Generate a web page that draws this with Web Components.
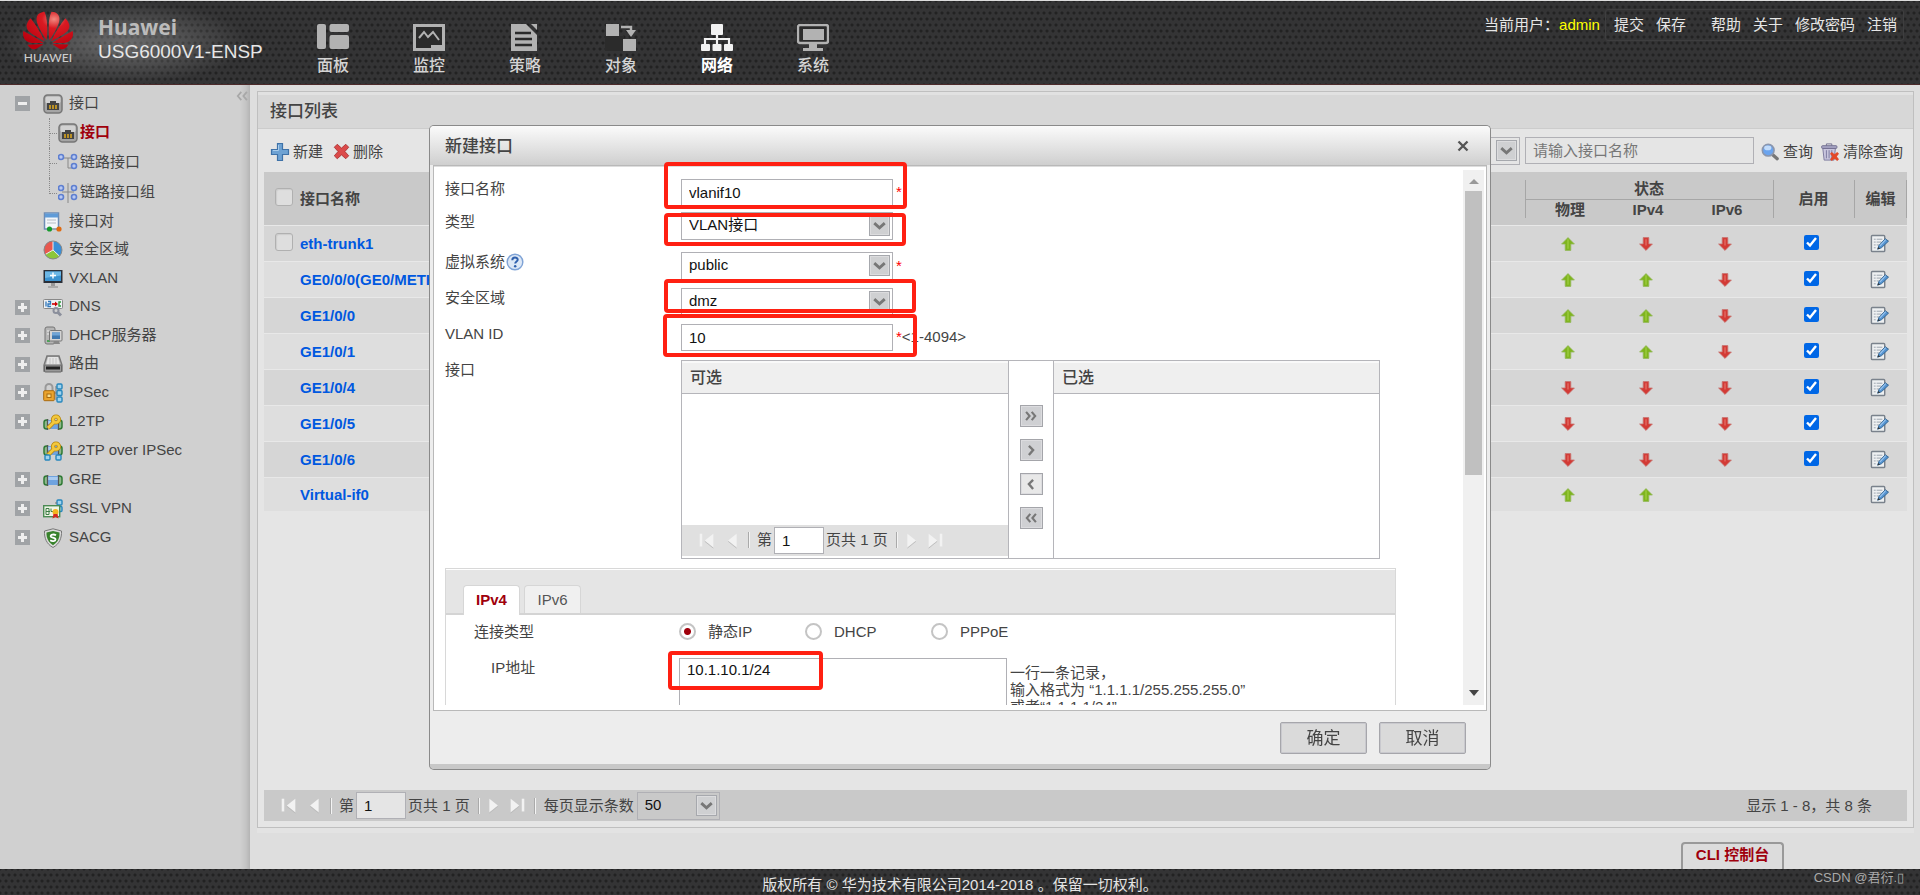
<!DOCTYPE html>
<html lang="zh-CN">
<head>
<meta charset="utf-8">
<title>USG6000V1-ENSP</title>
<style>
  html, body { margin: 0; height: 100%; }
  body {
    font: 15px/20px "Liberation Sans", "Noto Sans CJK SC", sans-serif;
    color: #444; background: #dedede;
  }
</style>
</head>
<body>
<fw-app></fw-app>

<script>
const DOTS = `background-color:#343435;
  background-image: radial-gradient(circle at 50% 50%, #222 0 1px, transparent 2px), radial-gradient(circle at 50% 50%, #222 0 1px, transparent 2px);
  background-size: 6px 12px; background-position: 0 0, 3px 6px;`;

function define(name, render) {
  customElements.define(name, class extends HTMLElement {
    connectedCallback() {
      if (this.shadowRoot) return;
      const t = document.createElement('template');
      t.innerHTML = render(this);
      this.attachShadow({ mode: 'open' }).append(t.content.cloneNode(true));
    }
  });
}

/* ---------- icons ---------- */
const port = `<rect x="1" y="1" width="18" height="18" rx="3.500" fill="#a5a5a5" stroke="#777" stroke-width="1.500"/><rect x="2.500" y="2.500" width="15" height="7" rx="2" fill="#ddd" opacity=".8"/><path d="M4 16V9h3V7h6v2h3v7z" fill="#444"/><path d="M7 11v4M10 11v4M13 11v4" stroke="#d9a520" stroke-width="1.600"/>`;
const ring = (x, y) => `<circle cx="${x}" cy="${y}" r="2.500" fill="#b9c9f2" stroke="#5e7fd0" stroke-width="1.600"/>`;
const tube = `<rect x="1" y="6" width="5" height="9" rx="2.500" fill="#8db98b" stroke="#2f7a35" stroke-width="1.500"/><rect x="14" y="6" width="5" height="9" rx="2.500" fill="#8db98b" stroke="#2f7a35" stroke-width="1.500"/><rect x="4.500" y="6" width="11" height="9" fill="#6fa3df"/><rect x="4.500" y="7" width="11" height="3" fill="#a9cbf1"/><path d="M4.500 5v11M15.500 5v11" stroke="#555" stroke-width="1.200"/>`;
const key = `<g fill="none" stroke="#b8860b" stroke-width="4.200"><circle cx="13" cy="5.500" r="3"/><path d="M11 8 5 14"/></g><g fill="none" stroke="#f3c83c" stroke-width="2.600"><circle cx="13" cy="5.500" r="3"/><path d="M11 8 5 14"/></g>`;
const blueBox = (x, y) => `<rect x="${x}" y="${y}" width="5" height="5" rx="1" fill="#9fd3ef" stroke="#2787bd" stroke-width="1.400"/>`;
const ICONS = {
  port,
  link: `<path d="M3 5h12M10 5v10h6" fill="none" stroke="#888"/>${ring(3,4)}${ring(16,4)}${ring(16,13)}`,
  linkgroup: `<path d="M10 0v20M4 9h12" fill="none" stroke="#888"/>${ring(3,5)}${ring(16,5)}${ring(3,14)}${ring(16,14)}`,
  pair: `<rect x="1.500" y="1" width="14" height="16" fill="#f3f6fa" stroke="#6d8cb5" stroke-width="1.500"/><rect x="2" y="1.500" width="13" height="4" fill="#5f9bd8"/><path d="M4 8h9M4 11h9" stroke="#b5bcc6"/><path d="M6 17h10" stroke="#aaa"/><circle cx="6.500" cy="17" r="2.600" fill="#169a2c"/><circle cx="16" cy="17" r="2.600" fill="#e06a10"/>`,
  zone: `<circle cx="10" cy="10" r="9" fill="#3b8fd6"/><path d="M10 10V1A9 9 0 0 0 2.200 14.500z" fill="#e8574e"/><path d="M10 10 2.200 14.500A9 9 0 0 0 16.500 16.200z" fill="#8cc63c"/><path d="M10 1v9l6.500 6.200M10 10l-7.800 4.500" stroke="#eee" fill="none"/><circle cx="10" cy="10" r="9" fill="none" stroke="#888"/>`,
  vxlan: `<rect x=".5" y="1" width="19" height="13" fill="#2a2f38"/><rect x="2" y="2.500" width="16" height="9.500" fill="#3b93d1"/><path d="M2 2.500h16v4L2 9z" fill="#6cb7e6"/><path d="M10 3.500v6M7 6.500h6" stroke="#fff" stroke-width="1.400"/><path d="M8 14h4v3H8z" fill="#999"/><path d="M5 17h10v2H5z" fill="#aaa"/>`,
  dns: `<rect x=".5" y="2.500" width="19" height="9" rx="1" fill="#eef1f4" stroke="#888"/><path d="M3 4.500v5M5 4.500h2.500v2.500H5v2.500h3" stroke="#2f78bd" stroke-width="1.300" fill="none"/><path d="M9 7h3" stroke="#c00" stroke-width="1.600"/><path d="m12 4.500 3 2.500-3 2.500z" fill="#c00"/><path d="M18 5h-2v4h2" stroke="#2c9b3b" fill="none" stroke-width="1.400"/><circle cx="13" cy="13.500" r="2.500" fill="none" stroke="#8b8f9c" stroke-width="2"/><path d="m14.500 15 3.500 3.500" stroke="#8b8f9c" stroke-width="3"/>`,
  dhcp: `<rect x="2" y="1" width="10" height="17" rx="2" fill="#b5b5b5" stroke="#757575"/><path d="M4 5h6M4 8h6" stroke="#eee"/><path d="M4 15h3" stroke="#2c9b3b" stroke-width="1.500"/><rect x="6.500" y="4.500" width="12.500" height="10.500" rx="1" fill="#d4d4d4" stroke="#777"/><rect x="9" y="6.500" width="8" height="6.500" fill="#3f78b0"/><path d="M9 6.500h8v3H9z" fill="#6fa4d6"/><path d="M10 18h7l-1-3h-5z" fill="#888"/>`,
  route: `<path d="M4 2h12l3 9v6H1v-6z" fill="#b5b5b5" stroke="#777" stroke-width="1.400"/><path d="M5 3h10l2 8H3z" fill="#e4e4e4"/><path d="M7 4v6M10 4v6M13 4v6" stroke="#c4c4c4"/><rect x="1.500" y="11" width="17" height="7" rx="1" fill="#999" stroke="#666"/><rect x="3" y="12.500" width="14" height="3" fill="#222"/>`,
  ipsec: `<path d="M13 3v14M11 10h3" stroke="#777" fill="none"/>${blueBox(14,1)}${blueBox(14,7.500)}${blueBox(14,14)}<path d="M2.500 10V4.500a3.500 3.500 0 0 1 7 0V10" fill="none" stroke="#999" stroke-width="2"/><rect x=".7" y="7.700" width="10.600" height="10" rx="1" fill="#eba42d" stroke="#a86a10"/><rect x="4" y="11" width="4" height="3.500" fill="#f9df8f" stroke="#a86a10"/>`,
  l2tp: `<g transform="translate(0 2)">${tube}</g><g transform="translate(0 2)">${key}</g>`,
  l2tpipsec: `<g transform="translate(0 -1)">${tube}</g>${key}${blueBox(2,14)}${blueBox(13,14)}`,
  gre: tube,
  ssl: `${blueBox(14,1)}${blueBox(14,7.500)}<path d="M12 4h2" stroke="#777"/><rect x=".7" y="6.700" width="16" height="11" fill="#eef5e6" stroke="#4a8b53" stroke-width="1.400"/><path d="M3 9.500h3v6H3zM8 9.500v3h2M3 12.500h4" stroke="#3c7d45" fill="none"/><circle cx="12.500" cy="13" r="3" fill="#f3b41e"/><path d="m10.500 15-1 4.500 3-1.500 3 1.500-1-4.500z" fill="#d3281f"/>`,
  sacg: `<path d="M10 .8 18.500 3c.3 7-2 13-8.500 16.500C3.500 16 1.200 10 1.500 3z" fill="#ddd" stroke="#777"/><path d="M10 3 16.500 4.600c.2 5.500-1.800 10-6.500 12.700C5.300 14.600 3.300 10 3.500 4.600z" fill="#37822b"/><path d="M13 7.200C11 6 7.500 6.300 7.700 8.300c.2 1.700 4.800 1 4.800 3.200 0 1.800-3.300 2-5.300.8" stroke="#fff" stroke-width="1.800" fill="none"/>`,
  add: `<path d="M7.500 1.500h5v6h6v5h-6v6h-5v-6h-6v-5h6z" fill="#6ea2d3" stroke="#3f72a8" stroke-width="1.200"/><path d="M8.500 3v5.500H3" stroke="#a9cdec" fill="none"/>`,
  del: `<path d="m5 1.500 5 4.500 5-4.500L18.500 5 14 10l4.500 5-3.500 3.500-5-4.500-5 4.500L1.500 15 6 10 1.500 5z" fill="#db4a4a" stroke="#a83232"/>`,
  search: `<path d="m13 13 5 4.500" stroke="#777" stroke-width="3.600" stroke-linecap="round"/><circle cx="8" cy="8" r="6.500" fill="#6ba4ee" stroke="#8b96ad" stroke-width="1.800"/><ellipse cx="7.500" cy="5.500" rx="4" ry="2.600" fill="#c2dcfb"/>`,
  trash: `<path d="M2 6h14l-1.500 13h-11z" fill="#c9c6de" stroke="#77749a"/><path d="M6 8v9M9 8v9M12 8v9" stroke="#77749a"/><rect x=".7" y="3" width="17" height="3" rx="1" fill="#a9a6c6" stroke="#6d6a8c"/><path d="M6 3V1h6v2" fill="none" stroke="#6d6a8c"/><path d="m12 10 3 2.500 3-2.500 2 2-2.500 3 2.500 3-2 2-3-2.500-3 2.500-2-2 2.500-3-2.500-3z" fill="#e2492a"/>`,
  up: `<path d="M10 2 18 10h-4.500v8h-7v-8H2z" fill="#7fb51e" stroke="#93b85b"/><path d="M10 4v12" stroke="#99c93c" stroke-width="2"/>`,
  down: `<path d="M10 18 2 10h4.500V2h7v8H18z" fill="#d33a35" stroke="#c77470"/><path d="M10 4v8" stroke="#e0655d" stroke-width="2"/>`,
  edit: `<rect x="1.500" y="1.500" width="14" height="17" rx="1" fill="#eef0f2" stroke="#7a828c" stroke-width="1.500"/><path d="M4 5.500h2M7 5.500h6M4 8.500h2M7 8.500h5M4 11.500h2M7 11.500h3M4 14.500h2" stroke="#9aa3ad"/><path d="m8 16 1.500-4L16 5l3.500 2.500-7.500 7z" fill="#5594d2" stroke="#33648f"/><path d="M10.500 12.500 16.500 6" stroke="#9cc6ee" stroke-width="1.200"/><path d="m8 16 .8-2.400 1.800 1.600z" fill="#333"/>`,
  help: `<circle cx="10" cy="10" r="8.700" fill="#dde8f6" stroke="#7fa3d6" stroke-width="1.600"/><path d="M7 8c0-4 6-3.600 6-.6 0 2-2.800 2-2.800 4.400" fill="none" stroke="#2f60ad" stroke-width="2.200"/><circle cx="10.200" cy="14.800" r="1.400" fill="#2f60ad"/>`,
  chevron: `<path d="m4.500 7.500 5.500 5 5.500-5" fill="none" stroke="#777" stroke-width="3"/>`,
  collapse: `<path d="m9 4-5 6 5 6M17 4l-5 6 5 6" fill="none" stroke="#a8a8a8" stroke-width="2.600"/>`,
  close: `<path d="m5 5 10 10M15 5 5 15" stroke="#555" stroke-width="2.600"/>`,
  rr: `<path d="m3 4 5 6-5 6M11 4l5 6-5 6" fill="none" stroke="#777" stroke-width="3"/>`,
  r: `<path d="m7 4 6 6-6 7" fill="none" stroke="#777" stroke-width="3.400"/>`,
  l: `<path d="m13 4-6 6 6 7" fill="none" stroke="#777" stroke-width="3.400"/>`,
  ll: `<path d="m9 4-5 6 5 6M17 4l-5 6 5 6" fill="none" stroke="#777" stroke-width="3"/>`,
  first: `<path d="M3.500 2v15" stroke="#f2f2f2" stroke-width="3"/><path d="M18 2v16l-10-8z" fill="#f2f2f2"/><path d="m8 11 10 8" stroke="#bbb"/>`,
  prev: `<path d="M16 2v16L6 10z" fill="#f2f2f2"/><path d="m6 11 10 8" stroke="#bbb"/>`,
  next: `<path d="M4 2v16l10-8z" fill="#f2f2f2"/><path d="m4 19 10-8" stroke="#bbb"/>`,
  last: `<path d="M16.500 2v15" stroke="#f2f2f2" stroke-width="3"/><path d="M2 2v16l10-8z" fill="#f2f2f2"/><path d="m2 19 10-8" stroke="#bbb"/>`,
};
define('fw-icon', el => `
  <style>:host{display:inline-block;flex:none;width:var(--size,20px);height:var(--size,20px)} svg{display:block;width:100%;height:100%}</style>
  <svg viewBox="0 0 20 20" aria-hidden="true">${ICONS[el.getAttribute('name')]}</svg>`);

const NAV = {
  dash: `<rect x="0" y="0" width="9" height="25" rx="2"/><rect x="12.500" y="0" width="19.500" height="8" rx="2"/><rect x="12.500" y="11" width="19.500" height="14" rx="2"/>`,
  monitor: `<path d="M0 0h32v27H0z"/><path d="M3 3h26v18h-3v3H3z" fill="#2b2b2b"/><path d="m6 14 5-6 4 5 5-5 6 8" fill="none" stroke="currentColor" stroke-width="2"/><path d="M18 21h8v4h-8z"/>`,
  policy: `<path d="M2 0h15l11 11v16H2z"/><path d="M22 0h6v6z"/><path d="M6 9h16M6 15h17M6 21h17" stroke="#2b2b2b" stroke-width="2.400"/>`,
  object: `<path d="M0 12h19v15H0z" fill="#2b2b2b"/><rect x="1" y="0" width="13" height="12"/><rect x="18" y="15" width="13" height="12"/><path d="M16 3h10v6" fill="none" stroke="currentColor" stroke-width="2.400"/><path d="M21 6h10l-5 7z"/>`,
  network: `<rect x="10" y="0" width="12" height="11" rx="1"/><path d="M16 10v10M4 20v-5h24v5" fill="none" stroke="currentColor" stroke-width="2.200"/><rect x="0" y="20" width="9" height="7" rx="1"/><rect x="11.500" y="20" width="9" height="7" rx="1"/><rect x="23" y="20" width="9" height="7" rx="1"/>`,
  system: `<rect x="1" y="1" width="30" height="18" rx="2" fill="#2b2b2b" stroke="currentColor" stroke-width="2.400"/><rect x="6" y="5" width="21" height="11"/><path d="M12 20h8v4h6v3H6v-3h6z"/>`,
};
define('nav-item', el => `
  <style>
    :host{display:block;color:#d4d4d4;--ink:#b2b2b2} :host([current]){color:#fff;--ink:#f2f2f2}
    a{display:flex;flex-direction:column;align-items:center;gap:5px;width:96px;color:inherit;text-decoration:none;font:500 16px/20px "Liberation Sans","Noto Sans CJK SC",sans-serif}
    :host([current]) a{font-weight:700}
    svg{width:32px;height:27px;color:var(--ink)}
  </style>
  <a href="#"><svg viewBox="0 0 32 27" fill="currentColor" aria-hidden="true">${NAV[el.getAttribute('icon')]}</svg><slot></slot></a>`);

define('fw-header', () => `
  <style>
    :host{display:flex;height:83px;border-top:1px solid #ddd;border-bottom:1px solid #4d2b2b;position:relative;color:#e6e6e6;${DOTS}}
    .glow{position:absolute;inset:0 auto 0 0;width:250px;background:radial-gradient(ellipse at 50% 50%,rgba(255,255,255,.28),transparent 70%)}
    .logo{position:relative;width:50px;margin:10px 0 0 23px;display:flex;flex-direction:column;align-items:center}
    .logo svg{width:50px;height:39px;display:block}
    .logo span{font:500 12px/16px Lato,sans-serif;color:#ccc}
    .brand{position:relative;margin:15px 0 0 25px;width:187px}
    .brand b{display:block;font:700 21px/23px "Noto Sans","Open Sans",sans-serif;color:#bbb}
    .brand span{display:block;font-size:19px;line-height:26px;white-space:nowrap}
    nav{display:flex;margin-top:23px}
    .user{margin:8px 16px 0 auto;display:flex;align-items:flex-start;line-height:32px;white-space:nowrap}
    .user em{font-style:normal;color:#ff0;margin-right:5px}
    .box{display:flex;gap:12px;border:1px solid #3e3e3f;border-radius:3px;height:30px;line-height:30px;padding:0 6px 0 8px}
    .box a{color:inherit;text-decoration:none}
    .box a:nth-child(3){margin-left:13px}
  </style>
  <div class="glow"></div>
  <div class="logo"><svg viewBox="0 2.900 24 18.200" aria-hidden="true"><defs><radialGradient id="g" cx=".62" cy=".2" r=".8"><stop offset="0" stop-color="#f08a80"/><stop offset=".3" stop-color="#d91a22"/><stop offset="1" stop-color="#b8000e"/></radialGradient></defs><path fill="url(#g)" d="M3.670 6.140S1.820 7.910 1.720 9.780v.35c.08 1.510 1.220 2.400 1.220 2.400 1.830 1.790 6.260 4.040 7.300 4.550 0 0 .06.03.1-.01l.02-.04v-.04C7.520 10.800 3.670 6.140 3.670 6.140zM9.650 18.600c-.02-.08-.1-.08-.1-.08l-7.380.26c.8 1.430 2.150 2.530 3.560 2.200.96-.25 3.160-1.780 3.880-2.300.06-.05.04-.09.04-.09zm.08-.78C6.490 15.630.21 12.280.21 12.280c-.15.46-.2.9-.21 1.300v.07c0 1.070.4 1.820.4 1.820.8 1.690 2.340 2.200 2.340 2.200.7.3 1.400.31 1.400.31.12.02 4.400 0 5.540 0 .05 0 .08-.05.08-.05v-.06c0-.03-.03-.05-.03-.05zM9.060 3.190a3.420 3.420 0 00-2.570 3.150v.41c.03.6.16 1.050.16 1.050.66 2.900 3.860 7.650 4.550 8.650.05.05.1.03.1.03a.1.1 0 00.06-.1c1.060-10.600-1.110-13.420-1.110-13.420-.32.02-1.190.23-1.190.23zm8.299 2.270s-.49-1.800-2.440-2.280c0 0-.57-.14-1.170-.22 0 0-2.180 2.810-1.120 13.430.01.07.06.08.06.08.07.03.1-.03.1-.03.72-1.030 3.900-5.760 4.550-8.640 0 0 .36-1.400.02-2.340zm-2.920 13.070s-.07 0-.09.05c0 0-.01.07.03.1.7.51 2.850 2 3.880 2.300 0 0 .16.05.43.06h.14c.69-.02 1.900-.37 3-2.260l-7.400-.25zm7.830-8.410c.14-2.060-1.940-3.970-1.940-3.980 0 0-3.850 4.660-6.670 10.800 0 0-.03.08.02.13l.04.01h.06c1.060-.53 5.460-2.770 7.280-4.540 0 0 1.150-.93 1.210-2.420zm1.520 2.140s-6.280 3.370-9.520 5.550c0 0-.05.04-.03.11 0 0 .03.06.07.06 1.160 0 5.560 0 5.670-.02 0 0 .57-.02 1.270-.29 0 0 1.560-.5 2.370-2.270 0 0 .73-1.450.17-3.140z"/></svg><span>HUAWEI</span></div>
  <div class="brand"><b>Huawei</b><span>USG6000V1-ENSP</span></div>
  <nav>
    <nav-item icon="dash">面板</nav-item><nav-item icon="monitor">监控</nav-item><nav-item icon="policy">策略</nav-item>
    <nav-item icon="object">对象</nav-item><nav-item icon="network" current>网络</nav-item><nav-item icon="system">系统</nav-item>
  </nav>
  <div class="user"><span>当前用户：</span><em>admin</em>
    <div class="box"><a href="#">提交</a><a href="#">保存</a><a href="#">帮助</a><a href="#">关于</a><a href="#">修改密码</a><a href="#">注销</a></div></div>`);

/* ---------- sidebar ---------- */
define('tree-item', el => {
  const t = el.getAttribute('toggle');
  return `
  <style>
    :host{display:flex;align-items:center;height:29px;padding-left:15px}
    :host([tight]){height:28px}
    :host([sub]){height:30px;padding-left:49px;position:relative}
    :host([sub])::before{content:"";position:absolute;left:49px;top:0;bottom:0;border-left:1px dotted #888}
    :host([sub])::after{content:"";position:absolute;left:49px;top:15px;width:8px;border-top:1px dotted #888}
    :host([sub][last])::before{bottom:14px}
    button,.none{width:15px;height:15px;padding:0;border:0;margin-right:13px;position:relative;background:#a0a3a6}
    .none{visibility:hidden}
    :host([sub]) .none{width:9px;margin:0}
    button::before,button.plus::after{content:"";position:absolute;background:#eee;left:3px;top:6px;width:9px;height:3px}
    button.plus::after{left:6px;top:3px;width:3px;height:9px}
    a{color:inherit;text-decoration:none;display:flex;align-items:center;gap:6px;white-space:nowrap}
    :host([sub]) a{gap:2px}
    :host([current]) a{color:#a0000c;font-weight:700}
    a span{margin-top:-2px}
  </style>
  ${t ? `<button class="${t}" aria-label="${t === 'plus' ? '展开' : '收起'}"></button>` : '<span class="none"></span>'}
  <a href="#"><fw-icon name="${el.getAttribute('icon')}"></fw-icon><span><slot></slot></span></a>`;
});
define('fw-sidebar', () => `
  <style>
    :host{display:block;width:250px;flex:none;box-sizing:border-box;padding-top:4px;position:relative;
      background:linear-gradient(90deg,#d0d0d0 240px,#c4c4c4 246px,#b4b4b4)}
    .c{position:absolute;right:3px;top:1px;width:12px;height:20px;padding:0;border:0;background:none;display:flex;align-items:center;--size:14px}
  </style>
  <button class="c" aria-label="收起菜单"><fw-icon name="collapse"></fw-icon></button>
  <tree-item icon="port" toggle="minus">接口</tree-item>
  <tree-item icon="port" sub current>接口</tree-item>
  <tree-item icon="link" sub>链路接口</tree-item>
  <tree-item icon="linkgroup" sub last>链路接口组</tree-item>
  <tree-item icon="pair" tight>接口对</tree-item>
  <tree-item icon="zone" tight>安全区域</tree-item>
  <tree-item icon="vxlan">VXLAN</tree-item>
  <tree-item icon="dns" toggle="plus" tight>DNS</tree-item>
  <tree-item icon="dhcp" toggle="plus">DHCP服务器</tree-item>
  <tree-item icon="route" toggle="plus" tight>路由</tree-item>
  <tree-item icon="ipsec" toggle="plus">IPSec</tree-item>
  <tree-item icon="l2tp" toggle="plus">L2TP</tree-item>
  <tree-item icon="l2tpipsec">L2TP over IPSec</tree-item>
  <tree-item icon="gre" toggle="plus">GRE</tree-item>
  <tree-item icon="ssl" toggle="plus">SSL VPN</tree-item>
  <tree-item icon="sacg" toggle="plus">SACG</tree-item>`);

/* ---------- shared control styles ---------- */
const CONTROLS = `
  input[type=text],select,textarea{box-sizing:border-box;border:1px solid #b0b0b5;background:transparent;border-radius:0;margin:0;font:inherit;color:#111;outline:0}
  input[type=text]{height:27px;padding:0 7px}
  .sel{display:grid;position:relative}
  select{appearance:none;height:28px;padding:0 30px 2px 7px;width:100%}
  .sel fw-icon{position:absolute;right:3px;top:3px;--size:19px;border:1px solid #a6a8ad;background:#cfd0d2;box-shadow:inset 0 0 0 1px #dcdcde;pointer-events:none}
`;
define('fw-pager', () => `
  <style>
    :host{display:flex;align-items:center;height:31px;padding-left:16px;white-space:nowrap;background:var(--bar,#c9c9c9)}
    ${CONTROLS}
    button{border:0;background:none;padding:0;--size:17px;display:flex}
    .a{margin-right:8px}
    i{width:1px;height:16px;background:#aaa;border-right:1px solid #f4f4f4;margin:0 7px 0 8px}
    i.t{margin:0 6px 0 8px}
    label{display:flex;align-items:center;gap:2px}
    input[type=text]{width:50px;background:var(--field,#e5e5e5)}
    .n1{margin-right:6px}
  </style>
  <button class="a" aria-label="首页"><fw-icon name="first"></fw-icon></button><button aria-label="上一页"><fw-icon name="prev"></fw-icon></button><i></i>
  <label>第 <input type="text" value="1"> 页共 1 页</label><i class="t"></i>
  <button class="n1" aria-label="下一页"><fw-icon name="next"></fw-icon></button><button aria-label="末页"><fw-icon name="last"></fw-icon></button>
  <slot></slot>`);

/* ---------- interface table ---------- */
const ROWS = [
  ['eth-trunk1', 'udd', 1, 1], ['GE0/0/0(GE0/METH)', 'uud', 1], ['GE1/0/0', 'uud', 1], ['GE1/0/1', 'uud', 1],
  ['GE1/0/4', 'ddd', 1], ['GE1/0/5', 'ddd', 1], ['GE1/0/6', 'ddd', 1], ['Virtual-if0', 'uu ', 0]];
const arrow = c => c === ' ' ? '' : `<fw-icon name="${c === 'u' ? 'up' : 'down'}" role="img" aria-label="${c === 'u' ? 'up' : 'down'}"></fw-icon>`;
define('interface-table', () => `
  <style>
    :host{display:block}
    table{width:100%;border-spacing:0;table-layout:fixed}
    th,td{padding:0;height:36px;box-sizing:border-box;text-align:center;vertical-align:middle}
    td{border-top:1px solid #e8e8e8;--size:16px}
    th{background-color:#c9c9c9;background-repeat:no-repeat;color:#444}
    tr.h1 th{height:28px} tr.h2 th{height:25px}
    .l{text-align:left}
    th.v{background-image:linear-gradient(#a6a6a6,#a6a6a6);background-size:1px 38px;background-position:0 8px}
    th.e{background-image:linear-gradient(#a6a6a6,#a6a6a6),linear-gradient(#a6a6a6,#a6a6a6);background-size:1px 38px;background-position:0 8px,52px 8px}
    tr.h1 th.s{border-bottom:1px solid #a6a6a6;background-size:1px 20px;padding-top:6px;line-height:20px}
    tr.h2 th{vertical-align:top;line-height:20px}
    tr.h2 th.f{background-image:linear-gradient(#a6a6a6,#a6a6a6);background-size:1px 18px}
    tbody tr:nth-child(odd) td{background:#d6d6d6} tbody tr:nth-child(even) td{background:#dedede}
    tbody tr:last-child td{height:34px}
    td a{color:#0058e0;font-weight:700;text-decoration:none;white-space:nowrap}
    tbody td.st{padding:0 3px 2px 0}
    .box{appearance:none;width:18px;height:18px;margin:0 0 4px 11px;border:1px solid #b0b0b0;border-radius:3px;background:#dedede;box-shadow:inset 1px 1px 1px #ccc;display:block}
    .on{width:15px;height:15px;margin:0 4px 4px 0;display:inline-block;vertical-align:middle;accent-color:#0067e6}
    fw-icon{vertical-align:middle} .edit{--size:19px;border:0;background:none;padding:0 2px 2px 0}
  </style>
  <table>
    <colgroup><col style="width:36px"><col><col style="width:90px"><col style="width:66px"><col style="width:92px"><col style="width:81px"><col style="width:53px"></colgroup>
    <thead>
      <tr class="h1"><th rowspan="2"><input class="box" type="checkbox" aria-label="全选"></th><th rowspan="2" class="l">接口名称</th><th colspan="3" class="v s">状态</th><th rowspan="2" class="v">启用</th><th rowspan="2" class="e">编辑</th></tr>
      <tr class="h2"><th class="f">物理</th><th>IPv4</th><th>IPv6</th></tr>
    </thead>
    <tbody>${ROWS.map(([n, s, on, box]) => `<tr>
      <td>${box ? `<input class="box" type="checkbox" aria-label="选择 ${n}">` : ''}</td><td class="l"><a href="#">${n}</a></td>
      <td class="st">${arrow(s[0])}</td><td class="st">${arrow(s[1])}</td><td class="st">${arrow(s[2])}</td>
      <td>${on ? `<input class="on" type="checkbox" checked aria-label="启用 ${n}">` : ''}</td>
      <td><button class="edit" aria-label="编辑 ${n}"><fw-icon name="edit"></fw-icon></button></td></tr>`).join('')}</tbody>
  </table>`);

define('interface-panel', () => `
  <style>
    :host{display:flex;flex-direction:column;flex:1;border:1px solid #bfbfbf;background:#e5e5e5;box-shadow:0 5px 0 #e3e3e3}
    ${CONTROLS}
    h1{margin:0;font:500 17px/32px "Liberation Sans","Noto Sans CJK SC",sans-serif;padding:4px 12px 0;background:#d7d7d7;border-bottom:1px solid #ccc;box-shadow:inset 0 3px 0 #e1e1e1}
    .bar{display:flex;align-items:center;height:43px;padding:0 10px 0 12px}
    .bar button{border:0;background:none;padding:2px 0 0;font:inherit;color:inherit;display:flex;align-items:center;gap:3px;margin-right:10px;white-space:nowrap}
    .bar .sel{width:120px;margin:0 5px 0 auto}
    .bar input{width:229px;margin:0 7px 1px 0} input::placeholder{color:#777;opacity:1}
    .bar button.q{gap:4px;margin-right:8px;--size:18px} .bar button.z{margin:0}
    interface-table{margin:0 6px}
    fw-pager{margin:auto 6px 6px}
    label.size{display:flex;align-items:center;gap:3px} label.size .sel{width:83px}
    .sp{width:1px;height:16px;background:#aaa;border-right:1px solid #f4f4f4;margin:0 8px}
    .total{margin:0 35px 0 auto}
  </style>
  <h1>接口列表</h1>
  <div class="bar">
    <button><fw-icon name="add"></fw-icon>新建</button><button><fw-icon name="del" style="--size:17px"></fw-icon>删除</button>
    <span class="sel"><select aria-label="查询条件"><option></option></select><fw-icon name="chevron"></fw-icon></span>
    <input type="text" placeholder="请输入接口名称" aria-label="接口名称">
    <button class="q"><fw-icon name="search"></fw-icon>查询</button><button class="q z"><fw-icon name="trash"></fw-icon>清除查询</button>
  </div>
  <interface-table></interface-table>
  <fw-pager><span class="sp"></span><label class="size">每页显示条数<span class="sel"><select><option>50</option></select><fw-icon name="chevron"></fw-icon></span></label><span class="total">显示 1 - 8，共 8 条</span></fw-pager>`);

/* ---------- dialog ---------- */
define('fw-dialog', () => `
  <style>
    :host{position:fixed;inset:0;display:grid;place-items:center;padding-bottom:2px}
    .win{position:relative;box-sizing:border-box;width:min(1062px,96vw);border:1px solid #8a8a8a;border-radius:5px;background:#ededed;border-bottom:0;box-shadow:0 1px 0 #888}
    header{height:39px;display:flex;align-items:center;justify-content:space-between;padding:0 18px 0 15px;border-radius:4px 4px 0 0;background:linear-gradient(#fbfbfb,#cfcfcf)}
    h2{margin:0;padding-top:4px;font:500 17px/24px "Liberation Sans","Noto Sans CJK SC",sans-serif}
    header button{border:0;background:none;padding:2px 0 0;display:flex;--size:18px}
    .body{margin:0 3px;padding:4px 2px 5px 0;display:flex;border:1px solid #b9b9b9;background:#fff;box-shadow:inset 0 1px 0 #ddd}
    .view{flex:1;height:535px;overflow:hidden}
    .rail{width:21px;background:#f0f0f0;display:flex;flex-direction:column;align-items:center}
    .rail::before,.rail::after{content:"";border:5px solid transparent;border-top-width:0;border-bottom:5px solid #999;margin:9px 0 7px}
    .rail::after{border-bottom-width:0;border-top:6px solid #444;margin:auto 0 9px}
    .rail i{width:17px;height:284px;background:#c0c0c0}
    footer{display:flex;justify-content:flex-end;gap:12px;padding:11px 24px 10px;border-bottom:5px solid #c8c8c8;border-radius:0 0 4px 4px}
    footer button{width:87px;height:32px;border:1px solid #a6a6ab;border-radius:2px;background:#dadada;box-shadow:inset 0 0 0 1px #c9c9ce;font:17px/24px "Liberation Sans","Noto Sans CJK SC",sans-serif;color:#444;padding:2px 0 0}
  </style>
  <div class="win" role="dialog" aria-labelledby="t">
    <header><h2 id="t">新建接口</h2><button aria-label="关闭"><fw-icon name="close"></fw-icon></button></header>
    <div class="body"><div class="view"><slot></slot></div><div class="rail"><i></i></div></div>
    <footer><button>确定</button><button>取消</button></footer>
    <slot name="marks"></slot>
  </div>`);

/* red annotation frame lying over the dialog; box="left top width height" */
define('mark-box', el => {
  const [l, t, w, h] = el.getAttribute('box').split(' ');
  return `<style>:host{position:absolute;left:${l}px;top:${t}px;width:${w}px;height:${h}px;box-sizing:border-box;border:4px solid #ff2012;border-radius:4px;pointer-events:none}</style>`;
});

define('transfer-list', () => `
  <style>
    :host{display:flex;width:699px;height:199px;box-sizing:border-box;border:1px solid #b5b5ba}
    section{display:flex;flex-direction:column;flex:326 0 0}
    section.r{flex-grow:325}
    h3{margin:0;font:500 16px/30px "Liberation Sans","Noto Sans CJK SC",sans-serif;padding:2px 8px 0;height:30px;background:#efefef;border-bottom:1px solid #b5b5ba;box-shadow:inset 0 2px 0 #f9f9f9}
    .mid{width:44px;border:solid #b5b5ba;border-width:0 1px;display:flex;flex-direction:column;align-items:center;gap:12px;padding-top:44px;box-sizing:content-box}
    .mid button{width:23px;height:22px;border:1px solid #a4a5aa;background:#cfd0d3;padding:0;display:flex;align-items:center;justify-content:center;--size:14px;box-shadow:inset 0 0 0 1px #dcdcdf}
    .mid button.on{background:#e8e8e8}
    fw-pager{margin:auto 0 2px;--bar:#e0e0e0;--field:#fff}
  </style>
  <section><h3>可选</h3><fw-pager></fw-pager></section>
  <div class="mid"><button aria-label="全部添加"><fw-icon name="rr"></fw-icon></button><button aria-label="添加"><fw-icon name="r"></fw-icon></button><button class="on" aria-label="移除"><fw-icon name="l"></fw-icon></button><button aria-label="全部移除"><fw-icon name="ll"></fw-icon></button></div>
  <section class="r"><h3>已选</h3></section>`);

define('interface-form', () => `
  <style>
    :host{display:block;padding:9px 0 0 11px}
    ${CONTROLS}
    .row{display:grid;grid-template-columns:236px 1fr;align-items:start;margin-bottom:8px}
    .row>label,.row>.lab{line-height:20px;display:flex;align-items:center;gap:1px;--size:18px}
    .row.a{margin-bottom:6px} .row.b{margin-bottom:12px} .row.c{margin-bottom:9px}
    .f{display:flex;align-items:center}
    .f>input[type=text],.f>.sel{width:212px}
    .req{color:red;margin-left:3px}
    .ip{width:951px;box-sizing:border-box;border:1px solid #d8d8d8;margin-top:9px}
    .tabs{display:flex;align-items:flex-end;gap:4px;height:46px;box-sizing:border-box;padding-left:17px;background:#e5e5e5;border-bottom:2px solid #d4d4d4;box-shadow:inset 0 1px 0 #fff}
    .tabs button{width:57px;height:28px;border:1px solid #d6d6d6;border-bottom:0;border-radius:4px 4px 0 0;background:#f0f0f0;font:inherit;color:#555;padding:2px 0 0}
    .tabs button.on{height:30px;margin-bottom:-2px;background:#fff;color:#a0000c;font-weight:700;padding:0}
    .types,.addr{display:grid;grid-template-columns:205px 1fr;padding-left:28px}
    .types{padding-top:7px;line-height:20px}
    .radios{display:flex} .radios label{display:flex;align-items:center;gap:12px;width:126px}
    input[type=radio]{appearance:none;width:17px;height:17px;margin:0;border:2px solid #c4c4c4;border-radius:50%;background:#fff}
    input[type=radio]:checked{background:radial-gradient(circle,#a0000c 0 3px,#fff 4px)}
    .addr{padding-top:16px} .addr>label{padding-left:17px}
    .addr .f{align-items:flex-start;gap:3px}
    textarea{width:328px;height:80px;padding:1px 7px;resize:none;line-height:20px;overflow:hidden}
    .addr p{margin:6px 0 0;line-height:17px;white-space:nowrap}
  </style>
  <div class="row a"><label for="n">接口名称</label><div class="f"><input type="text" id="n" value="vlanif10"><span class="req">*</span></div></div>
  <div class="row b"><label for="t">类型</label><div class="f"><span class="sel"><select id="t"><option>VLAN接口</option></select><fw-icon name="chevron"></fw-icon></span></div></div>
  <div class="row"><label for="v">虚拟系统<fw-icon name="help"></fw-icon></label><div class="f"><span class="sel"><select id="v"><option>public</option></select><fw-icon name="chevron"></fw-icon></span><span class="req">*</span></div></div>
  <div class="row"><label for="z">安全区域</label><div class="f"><span class="sel"><select id="z"><option>dmz</option></select><fw-icon name="chevron"></fw-icon></span></div></div>
  <div class="row c"><label for="i">VLAN ID</label><div class="f"><input type="text" id="i" value="10"><span class="req">*</span><span>&lt;1-4094&gt;</span></div></div>
  <div class="row"><span class="lab">接口</span><transfer-list></transfer-list></div>
  <div class="ip">
    <div class="tabs" role="tablist"><button class="on" role="tab" aria-selected="true">IPv4</button><button role="tab" aria-selected="false">IPv6</button></div>
    <div class="types"><span>连接类型</span><div class="radios"><label><input type="radio" name="c" checked>静态IP</label><label><input type="radio" name="c">DHCP</label><label><input type="radio" name="c">PPPoE</label></div></div>
    <div class="addr"><label for="a">IP地址</label><div class="f"><textarea id="a">10.1.10.1/24</textarea><p>一行一条记录，<br>输入格式为 “1.1.1.1/255.255.255.0”<br>或者“1.1.1.1/24”</p></div></div>
  </div>`);

/* ---------- page ---------- */
define('fw-footer', () => `
  <style>
    :host{display:block;height:26px;position:relative;color:#e4e4e4;text-align:center;line-height:31px;overflow:hidden;${DOTS}}
    span{position:absolute;right:16px;top:0;font-size:13px;line-height:18px;color:#aaa}
  </style>
  版权所有 © 华为技术有限公司2014-2018 。保留一切权利。<span>CSDN @君衍.▯</span>`);

define('fw-app', () => `
  <style>
    :host{display:flex;flex-direction:column;min-height:100vh}
    .mid{flex:1;display:flex}
    main{flex:1;display:flex;flex-direction:column;padding:6px 6px 0 7px;background:#dedede}
    .cli{align-self:flex-end;margin:14px 130px 0 0;width:103px;height:27px;border:1px solid #999;border-width:2px 2px 0;border-radius:4px 4px 0 0;background:#dcdcdc;color:#a0000c;font:700 15px/20px "Liberation Sans","Noto Sans CJK SC",sans-serif;padding:0 0 4px}
  </style>
  <fw-header></fw-header>
  <div class="mid"><fw-sidebar></fw-sidebar>
    <main><interface-panel></interface-panel><button class="cli">CLI 控制台</button></main></div>
  <fw-footer></fw-footer>
  <fw-dialog>
    <interface-form></interface-form>
    <mark-box slot="marks" box="234 36 243 47"></mark-box>
    <mark-box slot="marks" box="234 87 242 33"></mark-box>
    <mark-box slot="marks" box="234 153 252 34"></mark-box>
    <mark-box slot="marks" box="233 188 254 43"></mark-box>
    <mark-box slot="marks" box="238 525 155 39"></mark-box>
  </fw-dialog>`);
</script>
</body>
</html>
